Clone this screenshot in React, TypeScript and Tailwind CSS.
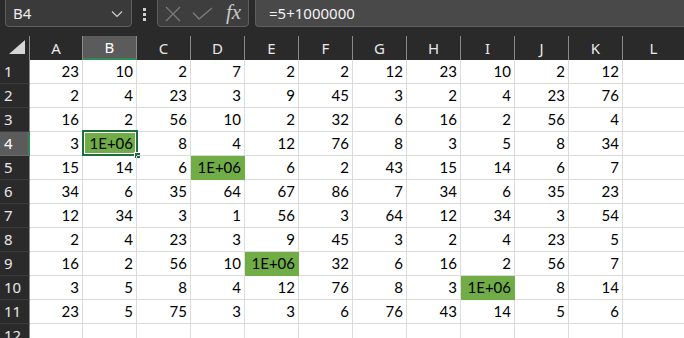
import React from "react";

const cols = ["A", "B", "C", "D", "E", "F", "G", "H", "I", "J", "K"];
const BIG = "1E+06";
const data: (number | string)[][] = [
  [23, 10, 2, 7, 2, 2, 12, 23, 10, 2, 12],
  [2, 4, 23, 3, 9, 45, 3, 2, 4, 23, 76],
  [16, 2, 56, 10, 2, 32, 6, 16, 2, 56, 4],
  [3, BIG, 8, 4, 12, 76, 8, 3, 5, 8, 34],
  [15, 14, 6, BIG, 6, 2, 43, 15, 14, 6, 7],
  [34, 6, 35, 64, 67, 86, 7, 34, 6, 35, 23],
  [12, 34, 3, 1, 56, 3, 64, 12, 34, 3, 54],
  [2, 4, 23, 3, 9, 45, 3, 2, 4, 23, 5],
  [16, 2, 56, 10, BIG, 32, 6, 16, 2, 56, 7],
  [3, 5, 8, 4, 12, 76, 8, 3, BIG, 8, 14],
  [23, 5, 75, 3, 3, 6, 76, 43, 14, 5, 6],
  ["", "", "", "", "", "", "", "", "", "", ""],
];

const cellFont = { fontFamily: "Lato, 'Liberation Sans', sans-serif" };
const uiFont = { fontFamily: "'Noto Sans', 'Open Sans', sans-serif" };

export default function App() {
  return (
    <div className="w-[684px] h-[338px] overflow-hidden bg-[#2a2a2a] flex flex-col" style={uiFont}>
      {/* Formula bar */}
      <div className="h-[28px] flex items-start overflow-hidden shrink-0">
        <div className="-mt-[4px] ml-[5px] w-[127px] h-[31px] rounded-[4px] border border-[#5e5e5e] bg-[#3a3a3a] flex items-center pt-[4px] pl-[7px] pr-[8px]">
          <span className="text-[15px] text-[#ececec] leading-none">B4</span>
          <svg className="ml-auto" width="12" height="8" viewBox="0 0 12 8">
            <path d="M1 1.5 L6 6.5 L11 1.5" fill="none" stroke="#cfcfcf" strokeWidth="1.2" />
          </svg>
        </div>
        <div className="w-[25px] h-[28px] flex flex-col items-center justify-center gap-[2px] pt-[1px]">
          <div className="w-[3px] h-[3px] bg-[#d0d0d0]" />
          <div className="w-[3px] h-[3px] bg-[#d0d0d0]" />
          <div className="w-[3px] h-[3px] bg-[#d0d0d0]" />
        </div>
        <div className="-mt-[4px] w-[92px] h-[31px] rounded-[4px] border border-[#5e5e5e] bg-[#3e3e3e] flex items-center pt-[4px] pl-[7px]">
          <svg width="16" height="16" viewBox="0 0 16 16">
            <path d="M1 1 L15 15 M15 1 L1 15" stroke="#7c7c7c" strokeWidth="1.3" fill="none" />
          </svg>
          <svg className="ml-[11px]" width="21" height="13" viewBox="0 0 21 13">
            <path d="M1 5.5 L7 12 L20 1" stroke="#7c7c7c" strokeWidth="1.3" fill="none" />
          </svg>
          <span
            className="ml-[13px] text-[21px] italic text-[#c9c9c9] leading-none -mt-[3px]"
            style={{ fontFamily: "'Liberation Serif', 'DejaVu Serif', serif" }}
          >
            fx
          </span>
        </div>
        <div className="-mt-[4px] ml-[6px] flex-1 h-[31px] rounded-l-[4px] border border-r-0 border-[#5e5e5e] bg-[#494949] flex items-center pt-[4px] pl-[13px]">
          <span className="text-[15px] text-[#f2f2f2] leading-none">=5+1000000</span>
        </div>
      </div>

      {/* Column headers */}
      <div className="mt-[8px] h-[24px] flex shrink-0 bg-[#2a2a2a]">
        <div className="w-[30px] h-full border-r border-[#8a8a8a] relative">
          <svg className="absolute left-[9px] top-[4px]" width="16" height="14" viewBox="0 0 16 14">
            <path d="M0 14 L16 0 L16 14 Z" fill="#d6d6d6" />
          </svg>
        </div>
        {cols.map((c, i) => (
          <div
            key={c}
            className={
              (i === 0 ? "w-[53px] " : "w-[54px] ") +
              "h-full border-r border-[#8a8a8a] flex items-center justify-center text-[15px] leading-none " +
              (c === "B"
                ? "bg-[#5b5b5b] text-white border-b-2 border-b-[#2f8a55]"
                : "text-[#e8e8e8]")
            }
          >
            {c}
          </div>
        ))}
        <div className="flex-1 h-full flex items-center justify-center text-[15px] leading-none text-[#e8e8e8]">L</div>
      </div>

      {/* Rows */}
      <div className="flex flex-col bg-white">
        {data.map((row, r) => (
          <div key={r} className="flex h-[24px] shrink-0">
            <div
              className={
                "w-[30px] h-full pl-[4px] flex items-center text-[15px] leading-none border-b " +
                (r === 3
                  ? "bg-[#5b5b5b] text-white border-r-2 border-r-[#2f8a55] border-b-[#6e6e6e]"
                  : "bg-[#2a2a2a] text-[#e8e8e8] border-b-[#3c3c3c] border-r border-r-[#8a8a8a]")
              }
            >
              {r + 1}
            </div>
            {row.map((v, c) => {
              const big = v === BIG;
              const active = r === 3 && c === 1;
              return (
                <div
                  key={c}
                  className={
                    (c === 0 ? "w-[53px] " : "w-[54px] ") +
                    "relative h-full border-r border-b flex items-end justify-end pr-[3px] pb-[3px] text-[15px] leading-[18px] text-black " +
                    (big ? "bg-[#70ad47] border-[#70ad47]" : "border-[#dcdcdc]")
                  }
                  style={cellFont}
                >
                  {v}
                  {active && (
                    <>
                      <div className="absolute -left-[1px] -top-[2px] -right-[2px] -bottom-[1px] border-2 border-[#1e6b3f]">
                        <div className="w-full h-full border border-white" />
                      </div>
                      <div className="absolute -right-[5px] -bottom-[4px] w-[7px] h-[7px] bg-[#1e6b3f] border border-white" />
                    </>
                  )}
                </div>
              );
            })}
            <div className="flex-1 h-full border-b border-[#dcdcdc]" />
          </div>
        ))}
      </div>
    </div>
  );
}
